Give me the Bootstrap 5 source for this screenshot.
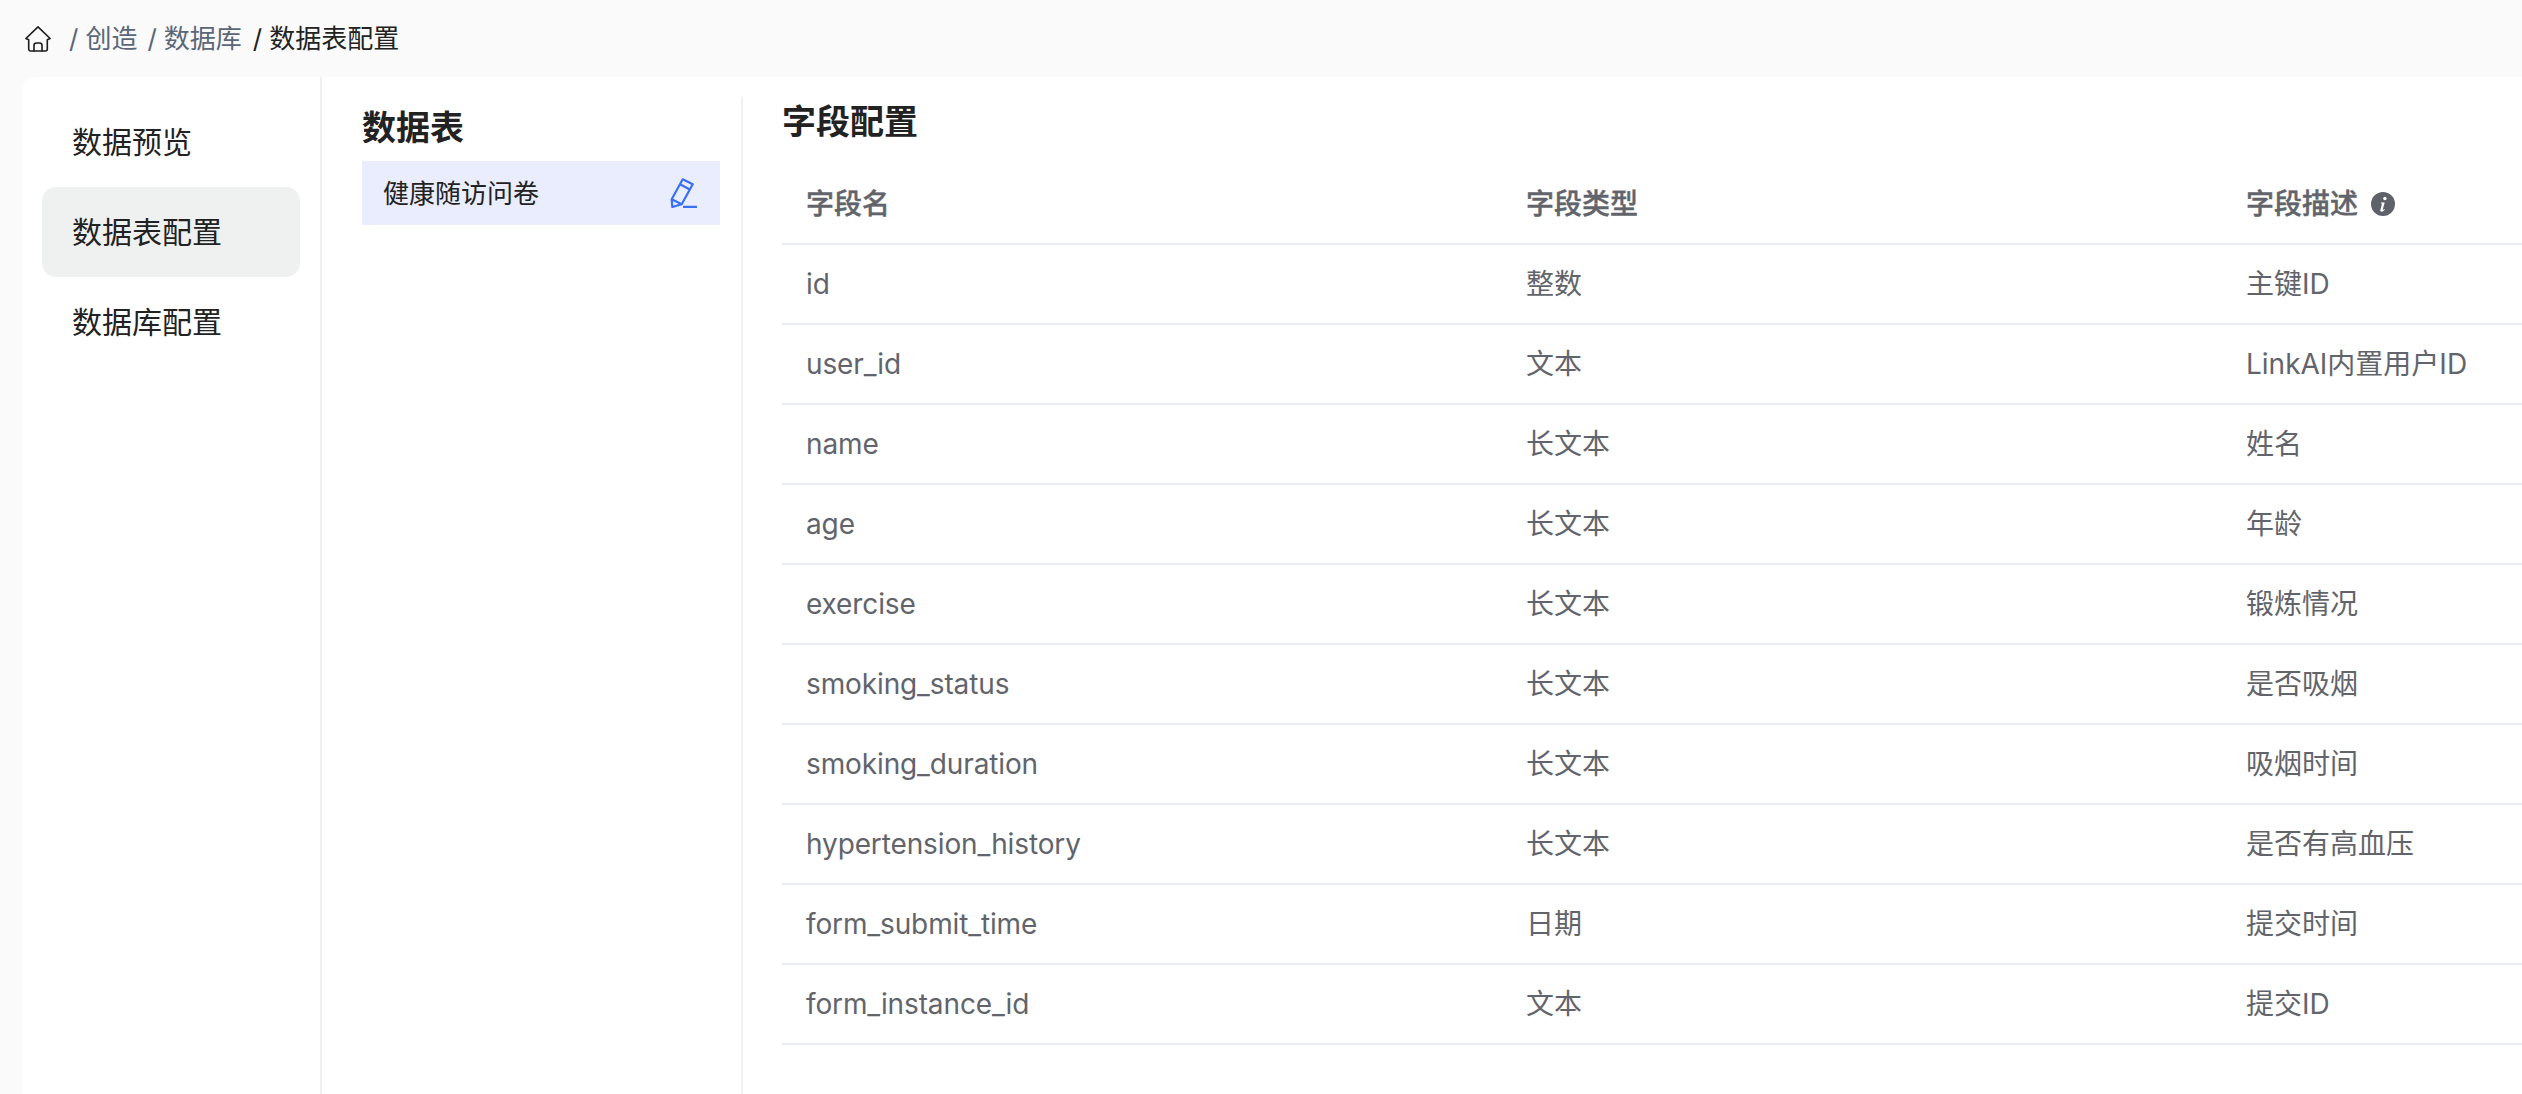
<!DOCTYPE html>
<html lang="zh-CN">
<head>
<meta charset="utf-8">
<title>数据表配置</title>
<link href="https://cdn.jsdelivr.net/npm/bootstrap@5.3.0/dist/css/bootstrap.min.css" rel="stylesheet">
<style>
html,body{height:100%}
body{background:#fafafa;overflow:hidden;font-family:Inter,"Noto Sans CJK SC",sans-serif;color:#222;display:flex;flex-direction:column;height:1094px}
.crumbbar{height:77px;padding-left:25px;flex:none}
.crumbbar .breadcrumb{--bs-breadcrumb-margin-bottom:0;--bs-breadcrumb-item-padding-x:0;--bs-breadcrumb-divider-color:#5b6678;font-size:26px;line-height:34px;margin:0}
.crumbbar .breadcrumb-item{padding:0}
.crumbbar .breadcrumb-item a{color:#5b6678;text-decoration:none}
.crumbbar .breadcrumb-item.home{margin-right:18px;display:flex;align-items:center}
.crumbbar .breadcrumb-item.first{margin-right:10px}
.crumbbar .breadcrumb-item.second{margin-right:11px}
.crumbbar .breadcrumb-item+.breadcrumb-item::before{content:"/";padding-right:7px;color:#5b6678}
.crumbbar .breadcrumb-item.active{color:#222}
.crumbbar .breadcrumb-item.active::before{color:#222}
.panel{flex:1;margin-left:22px;background:#fff;border-top-left-radius:14px;min-height:0;overflow:hidden}
.sidenav{width:300px;flex:none;border-right:2px solid #f0f0f0;padding:20px 20px 0 20px}
.sidenav .nav-link{height:90px;line-height:90px;padding:0 0 0 30px;font-size:30px;color:#222;border-radius:14px}
.sidenav .nav-link.active{background:#eff1f1;color:#222}
.tablelist{width:421px;flex:none;padding:29px 21px 0 40px;position:relative}
.tablelist::after{content:"";position:absolute;right:0;top:20px;bottom:0;width:2px;background:#f0f0f0}
.heading{font-size:34px;font-weight:700;line-height:44px;color:#222;margin:0}
.tablelist .list-group-item{height:64px;background:#e9edfd;border:0;border-radius:0;padding:0 22px 0 21px;font-size:26px;color:#222;width:358px}
.tablelist .heading{margin-bottom:11px}
.fields{flex:1;min-width:0;padding:23px 0 0 39px;overflow:hidden}
.fields .heading{margin-bottom:20px;line-height:44px}
.fieldtable{width:2160px;table-layout:fixed;margin:0;--bs-table-color:#62646b;--bs-table-bg:transparent;--bs-table-border-color:#e9edf3;font-size:28px}
.fieldtable th,.fieldtable td{height:80px;padding:0 0 0 24px;vertical-align:middle;border-bottom-width:2px;font-weight:400;line-height:34px;color:#62646b}
.fieldtable td:first-child{letter-spacing:-.12px}
.fieldtable>thead>tr>th{font-weight:500;border-bottom-color:#e9edf3;-webkit-text-stroke:.4px #62646b}
.fieldtable>:not(caption)>*>*{box-shadow:none}
.infoicon{margin-left:13px;vertical-align:-2px}
</style>
</head>
<body>
<nav class="crumbbar d-flex align-items-center" aria-label="breadcrumb">
  <ol class="breadcrumb align-items-center">
    <li class="breadcrumb-item home">
      <svg width="26" height="26" viewBox="0 0 26 26" fill="none" stroke="#1c1c1c" stroke-width="1.6" stroke-linejoin="round" stroke-linecap="round"><path d="M13 .9 .9 12.5l2.8 1.2V23a2 2 0 0 0 2 2h14.6a2 2 0 0 0 2-2v-9.300l2.800-1.200z"/><path d="M9 25v-5.500a2.500 2.500 0 0 1 2.500-2.500h3a2.500 2.500 0 0 1 2.500 2.500V25"/></svg>
    </li>
    <li class="breadcrumb-item first"><a href="#">创造</a></li>
    <li class="breadcrumb-item second"><a href="#">数据库</a></li>
    <li class="breadcrumb-item active" aria-current="page">数据表配置</li>
  </ol>
</nav>
<main class="panel d-flex">
  <aside class="sidenav">
    <nav class="nav nav-pills flex-column">
      <a class="nav-link" href="#">数据预览</a>
      <a class="nav-link active" href="#">数据表配置</a>
      <a class="nav-link" href="#">数据库配置</a>
    </nav>
  </aside>
  <section class="tablelist">
    <h2 class="heading">数据表</h2>
    <ul class="list-group">
      <li class="list-group-item d-flex justify-content-between align-items-center">
        <span>健康随访问卷</span>
        <svg width="28" height="30" viewBox="0 0 28 30" fill="none" stroke="#3b6ff5" stroke-width="2.200" stroke-linejoin="round"><path d="M12.700 1.300 22.700 6.300 11.700 26.300 2.300 29 1.700 21.300z"/><path d="M10 6.300 19.300 11.300M1.700 21.300 11.700 26.300"/><path d="M13 29H27" stroke-width="2.400"/></svg>
      </li>
    </ul>
  </section>
  <section class="fields">
    <h2 class="heading">字段配置</h2>
    <table class="table fieldtable">
      <thead>
        <tr>
          <th scope="col">字段名</th>
          <th scope="col">字段类型</th>
          <th scope="col">字段描述<svg class="infoicon" width="24" height="24" viewBox="0 0 25 25"><circle cx="12.500" cy="12.500" r="12.500" fill="#5f6168"/><circle cx="14.500" cy="6.800" r="1.800" fill="#fff"/><path d="M10.500 11h3.800l-2 7c-.2.800.4 1 1.600-.2l.5.5c-1.300 1.800-2.700 2.400-3.700 2.100-.9-.3-1.200-1-.9-2l1.500-5.600c.1-.5-.2-.8-1-.9z" fill="#fff"/></svg></th>
        </tr>
      </thead>
      <tbody>
        <tr><td>id</td><td>整数</td><td>主键ID</td></tr>
        <tr><td>user_id</td><td>文本</td><td>LinkAI内置用户ID</td></tr>
        <tr><td>name</td><td>长文本</td><td>姓名</td></tr>
        <tr><td>age</td><td>长文本</td><td>年龄</td></tr>
        <tr><td>exercise</td><td>长文本</td><td>锻炼情况</td></tr>
        <tr><td>smoking_status</td><td>长文本</td><td>是否吸烟</td></tr>
        <tr><td>smoking_duration</td><td>长文本</td><td>吸烟时间</td></tr>
        <tr><td>hypertension_history</td><td>长文本</td><td>是否有高血压</td></tr>
        <tr><td>form_submit_time</td><td>日期</td><td>提交时间</td></tr>
        <tr><td>form_instance_id</td><td>文本</td><td>提交ID</td></tr>
      </tbody>
    </table>
  </section>
</main>
<script src="https://cdn.jsdelivr.net/npm/bootstrap@5.3.0/dist/js/bootstrap.bundle.min.js"></script>
</body>
</html>
